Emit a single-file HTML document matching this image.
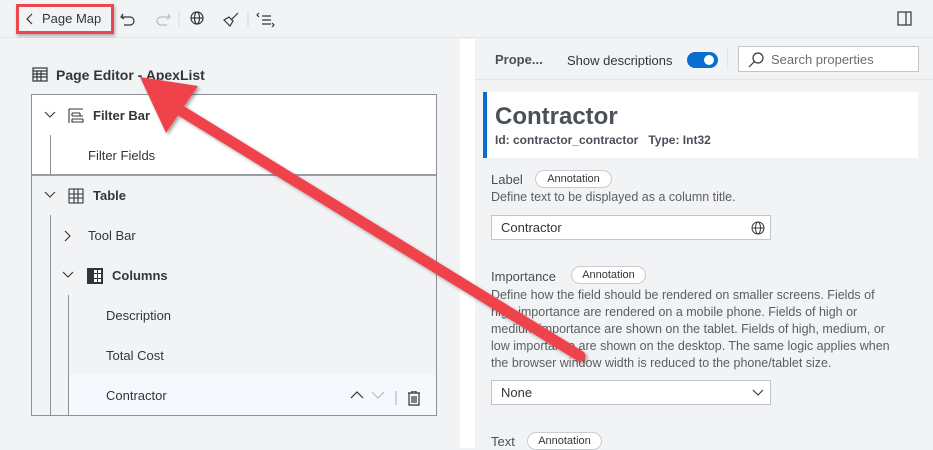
<!DOCTYPE html>
<html><head><style>
*{box-sizing:border-box;margin:0;padding:0}
body{width:933px;height:448px;overflow:hidden;background:#f2f3f5;font-family:"Liberation Sans",sans-serif;color:#32363a;position:relative}
.a{position:absolute;white-space:nowrap}
.pill{position:absolute;border:1px solid #c9ccd0;border-radius:9px;background:#fff;font-size:11px;height:18px;line-height:16px;text-align:center;color:#32363a}
.in{position:absolute;background:#fff;border:1px solid #c2c5c9;font-size:13px;line-height:23px;padding-left:9px}
.t{font-size:13px}
</style></head><body>
<div class="a" style="left:0;top:0;width:933px;height:38px;border-bottom:1px solid #e3e5e8;background:#f2f3f5"></div>
<div class="a" style="left:16px;top:4px;width:98px;height:30px;border:3px solid #e8484e;box-shadow:1px 2px 3px rgba(0,0,0,.3)"></div>
<svg class="a" style="left:26px;top:13px" width="8" height="12"><path d="M6 1L1 6L6 11" fill="none" stroke="#333" stroke-width="1.2"/></svg>
<div class="a" style="left:42px;top:11px;font-size:13px">Page Map</div>
<svg class="a" style="left:120px;top:10px" width="160" height="18" fill="none" stroke="#32363a" stroke-width="1.2">
<path d="M3 4L1 7L4 9M1 7H10A4 4 0 0 1 10 15H4"/>
<path d="M48 4L50 7L47 9M50 7H41A4 4 0 0 0 41 15H47" stroke="#b8bbbf"/>
<line x1="59" y1="1" x2="59" y2="17" stroke="#dcdee1"/>
<circle cx="77" cy="8" r="6"/><ellipse cx="77" cy="8" rx="2.5" ry="6"/><path d="M71 8H83"/>
<path d="M118 3L111 10M104 10L110 16L113 11L109 7ZM105 11L107 13"/>
<line x1="128" y1="1" x2="128" y2="17" stroke="#dcdee1"/>
<path d="M139 3L137 5L139 7M142 6H151M142 10H151M142 14H151M152 13L154 15L152 17"/>
</svg>
<svg class="a" style="left:897px;top:11px" width="15" height="15" fill="none" stroke="#32363a" stroke-width="1.2"><rect x="1" y="1" width="13" height="13"/><line x1="9" y1="1" x2="9" y2="14"/></svg>
<svg class="a" style="left:32px;top:67px" width="16" height="15" fill="none" stroke="#32363a" stroke-width="1.2"><rect x="1" y="1" width="14" height="13"/><path d="M1 4H15M1 7H15M1 10H15M5 4V14M9 4V14"/></svg>
<div class="a" style="left:56px;top:67px;font-size:14px;font-weight:bold">Page Editor - ApexList</div>
<div class="a" style="left:31px;top:94px;width:406px;height:322px;border:1px solid #8d9196"></div>
<div class="a" style="left:32px;top:95px;width:404px;height:80px;background:#fff"></div>
<div class="a" style="left:32px;top:174px;width:404px;height:2px;background:#9a9ea3"></div>
<svg class="a" style="left:44px;top:111px" width="12" height="8"><path d="M1 1L6 6L11 1" fill="none" stroke="#333" stroke-width="1.1"/></svg>
<svg class="a" style="left:68px;top:108px" width="16" height="16" fill="none" stroke="#32363a" stroke-width="1.1"><path d="M1 1H15M1 1V15M4 5H12M4 5V8M12 5V8M4 8H15M4 11H15M4 11V14H15V11"/></svg>
<div class="a t" style="left:93px;top:108px;font-weight:bold">Filter Bar</div>
<div class="a" style="left:50px;top:135px;width:1px;height:40px;background:#8d9196"></div>
<div class="a t" style="left:88px;top:148px">Filter Fields</div>
<svg class="a" style="left:44px;top:191px" width="12" height="8"><path d="M1 1L6 6L11 1" fill="none" stroke="#333" stroke-width="1.1"/></svg>
<svg class="a" style="left:68px;top:188px" width="16" height="16" fill="none" stroke="#32363a" stroke-width="1.1"><rect x="1" y="1" width="14" height="14"/><path d="M1 6H15M1 10H15M6 1V15M10 1V15"/></svg>
<div class="a t" style="left:93px;top:188px;font-weight:bold">Table</div>
<div class="a" style="left:50px;top:215px;width:1px;height:200px;background:#8d9196"></div>
<svg class="a" style="left:64px;top:230px" width="8" height="12"><path d="M1 1L6 6L1 11" fill="none" stroke="#333" stroke-width="1.1"/></svg>
<div class="a t" style="left:88px;top:228px">Tool Bar</div>
<svg class="a" style="left:62px;top:271px" width="12" height="8"><path d="M1 1L6 6L11 1" fill="none" stroke="#333" stroke-width="1.1"/></svg>
<svg class="a" style="left:87px;top:268px" width="16" height="16"><rect x="0" y="0" width="16" height="16" fill="#32363a"/><rect x="7" y="2" width="3" height="3" fill="#fff"/><rect x="11" y="2" width="3" height="3" fill="#fff"/><rect x="7" y="6" width="3" height="4" fill="#fff"/><rect x="11" y="6" width="3" height="4" fill="#fff"/><rect x="7" y="11" width="3" height="3" fill="#fff"/><rect x="11" y="11" width="3" height="3" fill="#fff"/></svg>
<div class="a t" style="left:112px;top:268px;font-weight:bold">Columns</div>
<div class="a" style="left:68px;top:295px;width:1px;height:120px;background:#8d9196"></div>
<div class="a t" style="left:106px;top:308px">Description</div>
<div class="a t" style="left:106px;top:348px">Total Cost</div>
<div class="a" style="left:69px;top:375px;width:367px;height:40px;background:#f5f9fd"></div>
<div class="a t" style="left:106px;top:388px">Contractor</div>
<svg class="a" style="left:350px;top:391px" width="80" height="16" fill="none" stroke-width="1.2"><path d="M1 7L7 1L13 7" stroke="#333"/><path d="M22 1L28 7L34 1" stroke="#b8bbbf"/><line x1="46" y1="-5" x2="46" y2="14" stroke="#b8bbbf"/><path d="M58 2H70M62 2V0H66V2M59 2V14H69V2M62 5V12M64 5V12M66 5V12" stroke="#333"/></svg>
<div class="a" style="left:460px;top:39px;width:473px;height:409px;background:#f2f3f5"></div>
<div class="a" style="left:460px;top:39px;width:15px;height:409px;background:#fff"></div>
<div class="a" style="left:475px;top:79px;width:458px;height:1px;background:#e3e5e8"></div>
<div class="a t" style="left:495px;top:52px;font-weight:bold;color:#4a4f55">Prope...</div>
<div class="a t" style="left:567px;top:53px">Show descriptions</div>
<div class="a" style="left:687px;top:52px;width:31px;height:16px;border-radius:8px;background:#0a6ed1"></div>
<div class="a" style="left:704px;top:55px;width:10px;height:10px;border-radius:5px;background:#fff"></div>
<div class="a" style="left:727px;top:48px;width:1px;height:22px;background:#e3e5e8"></div>
<div class="a" style="left:738px;top:46px;width:181px;height:26px;background:#fff;border:1px solid #c2c5c9"></div>
<svg class="a" style="left:748px;top:52px" width="16" height="16" fill="none" stroke="#32363a" stroke-width="1.2"><circle cx="10" cy="6" r="5"/><path d="M6.5 9.5L1 15"/></svg>
<div class="a t" style="left:771px;top:52px;color:#6a6d70">Search properties</div>
<div class="a" style="left:483px;top:92px;width:435px;height:66px;background:#fff;border-left:4px solid #0a6ed1"></div>
<div class="a" style="left:495px;top:103px;font-size:24px;font-weight:bold;color:#4a5058">Contractor</div>
<div class="a" style="left:495px;top:133px;font-size:12px;font-weight:bold;color:#4a5058">Id: contractor_contractor&nbsp;&nbsp;&nbsp;Type: Int32</div>
<div class="a t" style="left:491px;top:172px;color:#4a4f55">Label</div>
<div class="pill" style="left:535px;top:170px;width:77px">Annotation</div>
<div class="a" style="left:491px;top:190px;font-size:12.5px;color:#5a5e63">Define text to be displayed as a column title.</div>
<div class="in" style="left:491px;top:215px;width:280px;height:25px">Contractor</div>
<svg class="a" style="left:751px;top:221px" width="14" height="14" fill="none" stroke="#32363a" stroke-width="1"><circle cx="7" cy="7" r="6"/><ellipse cx="7" cy="7" rx="2.5" ry="6"/><path d="M1 7H13"/></svg>
<div class="a t" style="left:491px;top:269px;color:#4a4f55">Importance</div>
<div class="pill" style="left:571px;top:266px;width:75px">Annotation</div>
<div class="a" style="left:491px;top:287px;font-size:12.5px;line-height:17px;color:#5a5e63">Define how the field should be rendered on smaller screens. Fields of<br>high importance are rendered on a mobile phone. Fields of high or<br>medium importance are shown on the tablet. Fields of high, medium, or<br>low importance are shown on the desktop. The same logic applies when<br>the browser window width is reduced to the phone/tablet size.</div>
<div class="in" style="left:491px;top:380px;width:280px;height:25px">None</div>
<svg class="a" style="left:752px;top:389px" width="12" height="8"><path d="M1 1L6 6L11 1" fill="none" stroke="#333" stroke-width="1.1"/></svg>
<div class="a t" style="left:491px;top:434px;color:#4a4f55">Text</div>
<div class="pill" style="left:527px;top:432px;width:75px">Annotation</div>
<svg class="a" style="left:0;top:0" width="933" height="448">
<defs><filter id="s"><feDropShadow dx="2" dy="2" stdDeviation="1.5" flood-color="#000" flood-opacity=".35"/></filter></defs>
<g filter="url(#s)" fill="#f0434b">
<line x1="170" y1="104" x2="580" y2="356" stroke="#f0434b" stroke-width="11" stroke-linecap="round"/>
<polygon points="140,77 198,86 166,133"/>
</g>
</svg>
</body></html>
